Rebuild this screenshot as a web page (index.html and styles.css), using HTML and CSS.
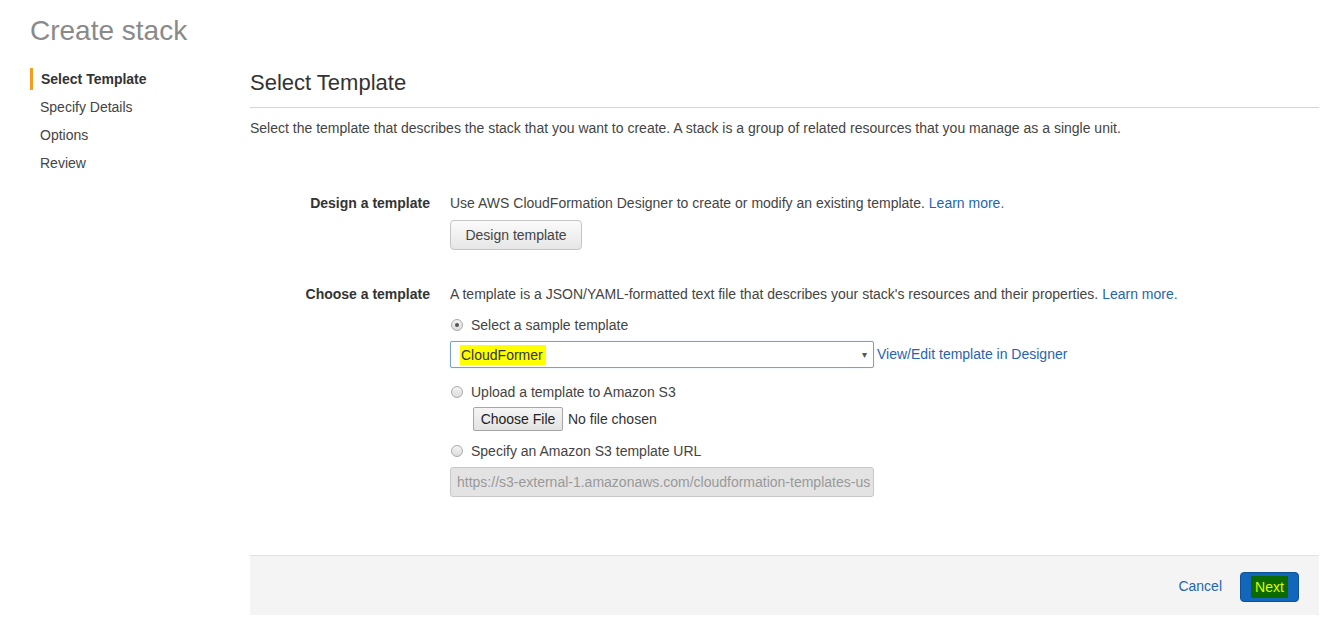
FILE: index.html
```html
<!DOCTYPE html>
<html lang="en">
<head>
<meta charset="utf-8">
<title>Create stack</title>
<link rel="stylesheet" href="styles.css">
</head>
<body>
<div class="page">
  <h1 class="page-title">Create stack</h1>
  <div class="layout">
    <nav class="steps">
      <div class="step active">Select Template</div>
      <div class="step">Specify Details</div>
      <div class="step">Options</div>
      <div class="step">Review</div>
    </nav>
    <main class="main">
      <h2 class="section-title">Select Template</h2>
      <p class="desc">Select the template that describes the stack that you want to create. A stack is a group of related resources that you manage as a single unit.</p>

      <div class="form-row design-row">
        <div class="label">Design a template</div>
        <div class="field">
          <div class="text">Use AWS CloudFormation Designer to create or modify an existing template. <a class="link" href="#">Learn more.</a></div>
          <button class="btn design-btn">Design template</button>
        </div>
      </div>

      <div class="form-row choose-row">
        <div class="label">Choose a template</div>
        <div class="field">
          <div class="text">A template is a JSON/YAML-formatted text file that describes your stack's resources and their properties. <a class="link" href="#">Learn more.</a></div>
          <div class="radio-line r1"><span class="radio checked"></span>Select a sample template</div>
          <div class="select-line">
            <div class="select"><span class="hl">CloudFormer</span><span class="caret">&#9662;</span></div>
            <a class="link" href="#">View/Edit template in Designer</a>
          </div>
          <div class="radio-line r2"><span class="radio"></span>Upload a template to Amazon S3</div>
          <div class="file-line"><button class="file-btn">Choose File</button><span class="file-text">No file chosen</span></div>
          <div class="radio-line r3"><span class="radio"></span>Specify an Amazon S3 template URL</div>
          <div class="url-input">https://s3-external-1.amazonaws.com/cloudformation-templates-us</div>
        </div>
      </div>

      <div class="footer">
        <a class="cancel" href="#">Cancel</a>
        <button class="next-btn"><span class="next-hl">Next</span></button>
      </div>
    </main>
  </div>
</div>
</body>
</html>
```

FILE: styles.css
```css
html, body {
  margin: 0;
  padding: 0;
  background: #fff;
}
body {
  font-family: "Liberation Sans", Arial, sans-serif;
  font-size: 14px;
  color: #444;
}
.page {
  padding: 15px 19px 0 30px;
}
.page-title {
  margin: 0;
  font-size: 28px;
  line-height: 32px;
  font-weight: normal;
  color: #8a8a8a;
}
.layout {
  display: flex;
  margin-top: 18px;
}
.steps {
  width: 220px;
  flex: none;
}
.step {
  line-height: 28px;
  padding-left: 10px;
  color: #444;
}
.step.active {
  font-weight: bold;
  color: #333;
  border-left: 3px solid #f79c1d;
  padding-left: 8px;
  line-height: 22px;
  margin-top: 3px;
  margin-bottom: 3px;
}
.main {
  flex: 1;
}
.section-title {
  margin: 5px 0 0;
  font-size: 22px;
  line-height: 26px;
  font-weight: normal;
  color: #333;
  padding-bottom: 11px;
  border-bottom: 1px solid #d5d5d5;
}
.desc {
  margin: 10px 0 0;
  line-height: 20px;
}
.form-row {
  display: flex;
  gap: 20px;
}
.design-row {
  margin-top: 55px;
}
.choose-row {
  margin-top: 34px;
}
.label {
  width: 180px;
  flex: none;
  text-align: right;
  font-weight: bold;
  line-height: 20px;
  color: #333;
}
.field {
  flex: 1;
}
.text {
  line-height: 20px;
}
.link {
  color: #1f65b1;
  text-decoration: none;
}
.btn {
  font-family: inherit;
}
.design-btn {
  display: block;
  margin-top: 7px;
  width: 132px;
  height: 30px;
  border: 1px solid #c4c4c4;
  border-radius: 4px;
  background: linear-gradient(#fbfbfb, #e6e6e6);
  color: #444;
  font-size: 14px;
  padding: 0;
}
.radio-line {
  display: flex;
  align-items: center;
  line-height: 20px;
}
.r1 { margin-top: 11px; }
.r2 { margin-top: 14px; }
.r3 { margin-top: 10px; }
.radio {
  width: 10px;
  height: 10px;
  border: 1px solid #a9a9a9;
  border-radius: 50%;
  background: linear-gradient(#f4f4f4, #dcdcdc);
  margin: 0 8px 0 1px;
  position: relative;
  flex: none;
}
.radio.checked::after {
  content: "";
  position: absolute;
  left: 3px;
  top: 3px;
  width: 4px;
  height: 4px;
  border-radius: 50%;
  background: #555;
}
.select-line {
  display: flex;
  align-items: center;
  margin-top: 6px;
}
.select {
  width: 412px;
  height: 25px;
  border: 1px solid #76a0d6;
  border-radius: 2px;
  box-shadow: 0 0 1px rgba(80, 140, 220, 0.5);
  display: flex;
  align-items: center;
  justify-content: space-between;
  padding: 0 0 0 10px;
  box-sizing: content-box;
  margin-right: 3px;
}
.hl {
  background: #ffff00;
  color: #333;
  line-height: 20px;
  padding: 0 3px 0 1px;
  margin-left: -1px;
}
.caret {
  font-size: 10px;
  color: #555;
  margin-right: 6px;
}
.select-line .link {
  margin-top: -2px;
}
.file-line {
  display: flex;
  align-items: center;
  margin-top: 5px;
  margin-left: 23px;
}
.file-btn {
  font-family: inherit;
  font-size: 14px;
  height: 24px;
  width: 90px;
  padding: 0;
  border: 1px solid #a6a6a6;
  border-radius: 2px;
  background: linear-gradient(#f5f5f5, #e3e3e3);
  color: #222;
}
.file-text {
  margin-left: 5px;
  color: #333;
}
.url-input {
  margin-top: 6px;
  width: 424px;
  height: 30px;
  box-sizing: border-box;
  border: 1px solid #c8c8c8;
  border-radius: 3px;
  background: #e3e3e3;
  color: #999;
  line-height: 28px;
  padding-left: 6px;
  white-space: nowrap;
  overflow: hidden;
}
.footer {
  margin-top: 58px;
  height: 59px;
  border-top: 1px solid #e2e2e2;
  background: #f4f4f4;
  display: flex;
  align-items: center;
  justify-content: flex-end;
  padding-right: 20px;
}
.cancel {
  color: #1f65b1;
  text-decoration: none;
  margin-right: 18px;
  margin-top: 1px;
}
.next-btn {
  font-family: inherit;
  font-size: 14px;
  width: 59px;
  height: 30px;
  padding: 0;
  border: 1px solid #0b5299;
  border-radius: 4px;
  background: #1266bb;
  margin-top: 2px;
}
.next-hl {
  background: #0c6b00;
  color: #e4f800;
  padding: 3px 4px;
}
```
